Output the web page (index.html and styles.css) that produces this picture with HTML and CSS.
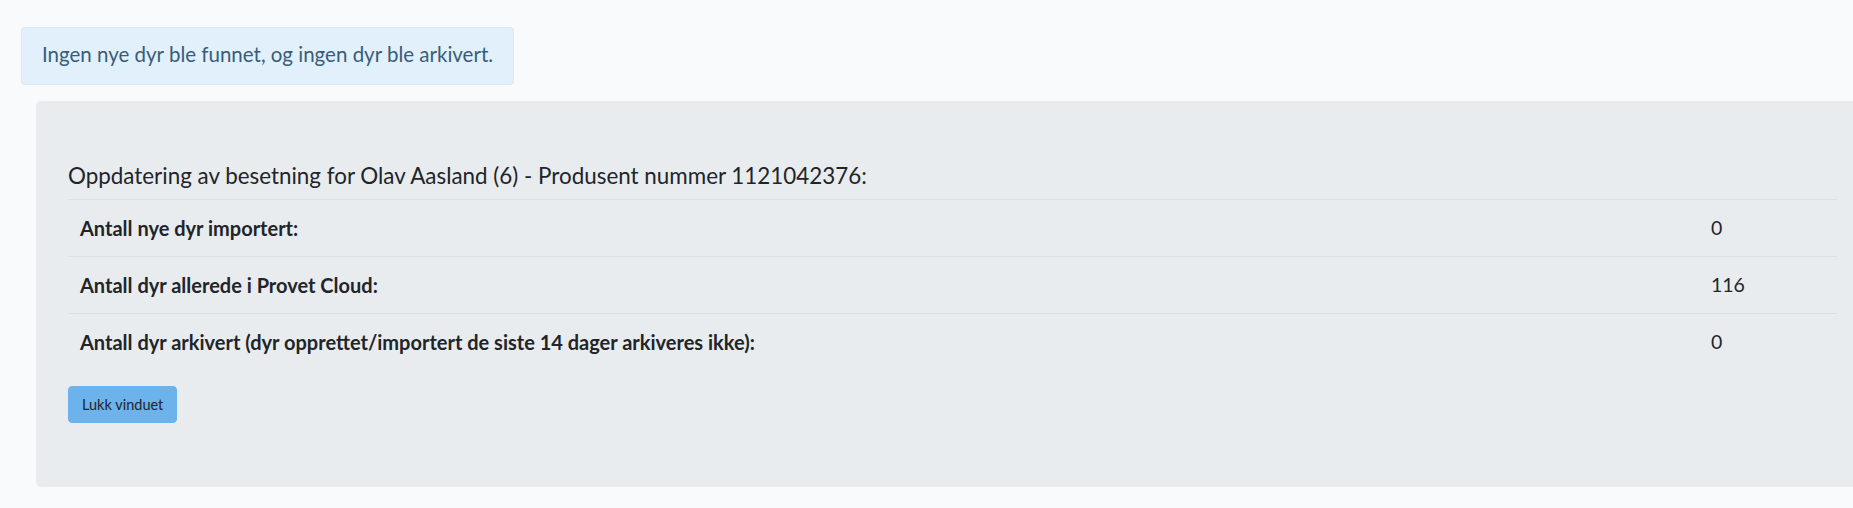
FILE: index.html
```html
<!DOCTYPE html>
<html lang="no">
  <head>
    <meta charset="UTF-8" />
    <title>Oppdatering av besetning</title>
    <meta name="viewport" content="width=device-width, initial-scale=1.0" />
    <link rel="stylesheet" href="styles.css">
  </head>
  <body>
    <div class="page">
      <div class="alert-info">Ingen nye dyr ble funnet, og ingen dyr ble arkivert.</div>

      <section class="jumbotron">
        <div class="result-title">Oppdatering av besetning for Olav Aasland (6) - Produsent nummer 1121042376:</div>
        <div class="result-table">
          <div class="result-row">
            <div class="result-label">Antall nye dyr importert:</div>
            <div class="result-value">0</div>
          </div>
          <div class="result-row">
            <div class="result-label">Antall dyr allerede i Provet Cloud:</div>
            <div class="result-value">116</div>
          </div>
          <div class="result-row">
            <div class="result-label">Antall dyr arkivert (dyr opprettet/importert de siste 14 dager arkiveres ikke):</div>
            <div class="result-value">0</div>
          </div>
        </div>
        <button class="btn-info" id="closeBtn">Lukk vinduet</button>
      </section>
    </div>
  </body>
</html>
```

FILE: styles.css
```css
html,
body {
  margin: 0;
  overflow: hidden;
}

body {
  font-family: Lato, "Noto Sans", sans-serif;
  background-color: #f8fafc;
  color: #212529;
}

.page {
  padding: 27px 0 0 21px;
}

.alert-info {
  display: inline-block;
  padding: 11px 20px 14px;
  font-size: 20.5px;
  line-height: 31px;
  color: #385d7a;
  background-color: #e2f0fb;
  border: 1px solid #d6e9f9;
  border-radius: 4px;
  margin-bottom: 16px;
}

.jumbotron {
  box-sizing: border-box;
  width: 1833px;
  margin-left: 15px;
  padding: 64px 32px;
  background-color: #e9ecef;
  border-radius: 5px;
}

.result-title {
  font-size: 22.4px;
  line-height: 22px;
  padding-bottom: 12px;
}

.result-row {
  display: grid;
  grid-template-columns: 1fr 138px;
  border-top: 1px solid #dcdfe3;
}

.result-label,
.result-value {
  padding: 15px 12px;
  line-height: 26px;
}

.result-label {
  font-size: 20px;
  font-weight: bold;
}

.result-value {
  font-size: 19.5px;
}

.btn-info {
  margin-top: 16px;
  padding: 7px 13px;
  font-family: inherit;
  font-size: 14.5px;
  line-height: 21px;
  color: #212529;
  background-color: #6cb2eb;
  border: 1px solid #6cb2eb;
  border-radius: 4px;
  cursor: pointer;
}
```
